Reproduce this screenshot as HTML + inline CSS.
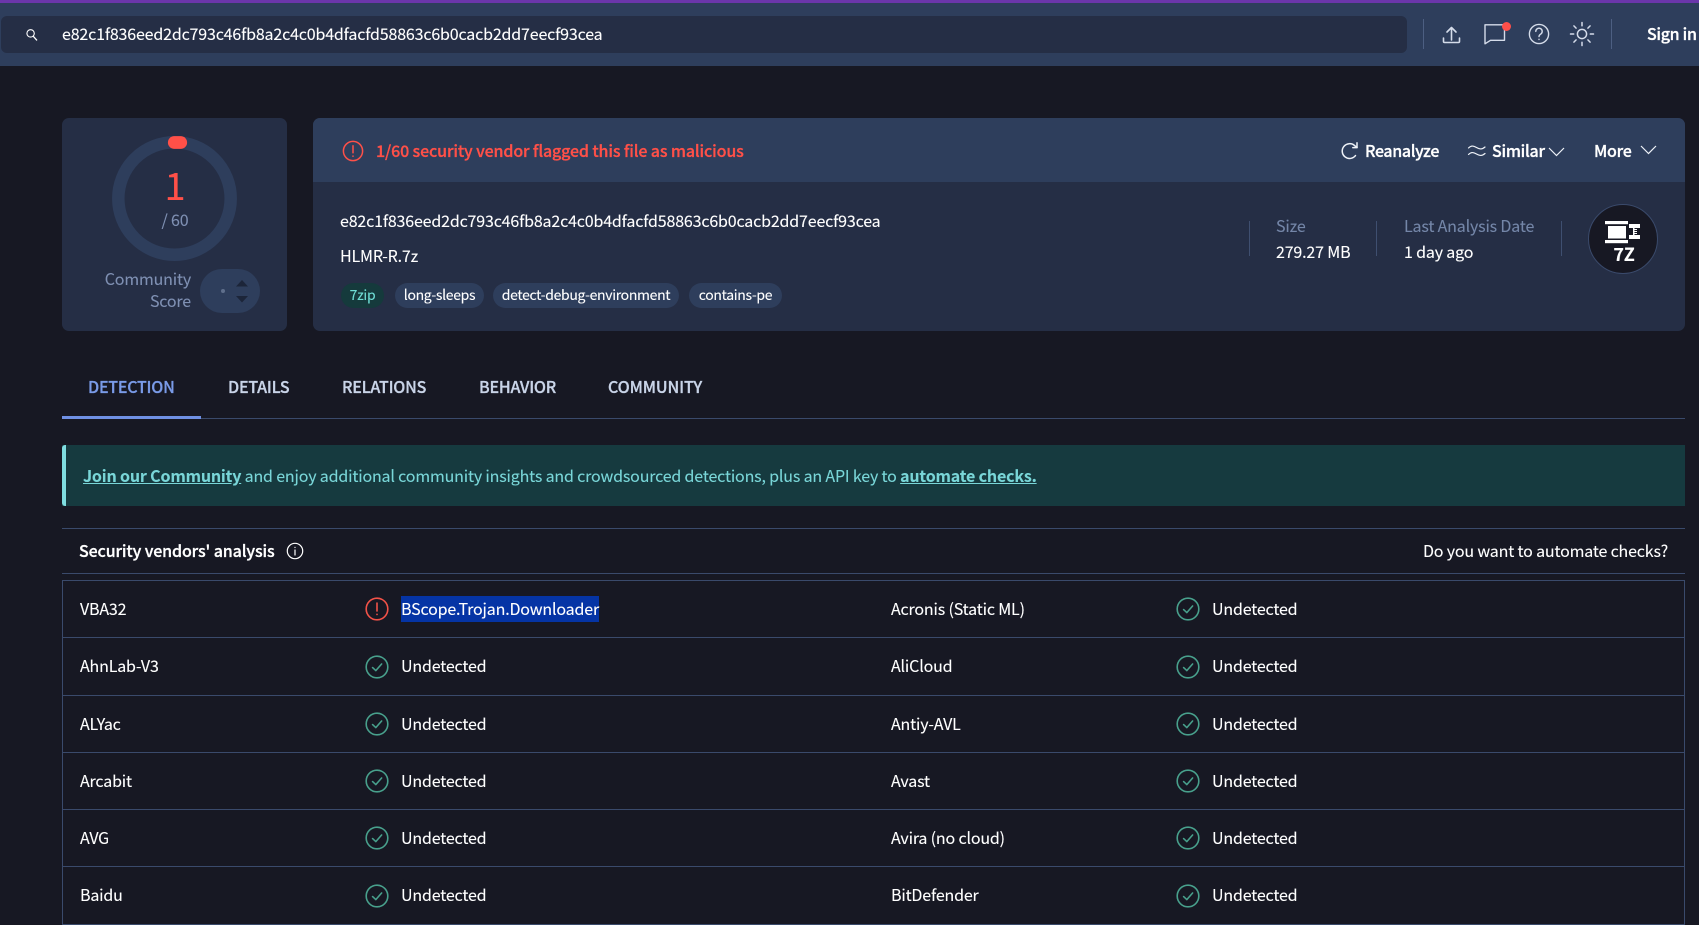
<!DOCTYPE html>
<html><head><meta charset="utf-8"><title>VirusTotal</title>
<style>
html,body{margin:0;padding:0;background:#171823;}
body{width:1699px;height:925px;position:relative;overflow:hidden;font-family:"Liberation Sans","Noto Sans CJK JP",sans-serif;}
#p,#p *{font-family:"Noto Sans CJK JP","Liberation Sans",sans-serif;}
.a{position:absolute;}
.t{position:absolute;white-space:nowrap;font-size:16px;line-height:24px;height:24px;color:#fff;letter-spacing:-.17px;-webkit-text-stroke:.1px currentColor;}
.s{font-weight:500;-webkit-text-stroke:.3px currentColor;}
.m{color:#7486a8;}
.l{position:absolute;background:#3a4a6b;height:1px;}
.v{position:absolute;background:#3f4f70;width:1px;}
.g{position:absolute;height:25px;top:283px;border-radius:12.5px;background:#2e3e5c;color:#fff;font-size:14px;line-height:24px;text-align:center;letter-spacing:-.33px;-webkit-text-stroke:.1px currentColor;}
svg{position:absolute;overflow:visible;}
.h{color:#c9d4e8;letter-spacing:-.22px;}
</style></head><body><div id="p">
<div class="a" style="left:0;top:0;width:1699px;height:66px;background:#2e3e5c"></div>
<div class="a" style="left:0;top:0;width:1699px;height:3px;background:#6b36aa"></div>
<div class="a" style="left:1px;top:16px;width:1406px;height:37px;background:#252e45;border-radius:6px"></div>
<svg style="left:24px;top:27px" width="16" height="16" viewBox="0 0 16 16" fill="none" stroke="#fff" stroke-width="1.1"><circle cx="6.6" cy="6.4" r="3.7"/><path d="M9.2 9.2 13 13.4" stroke-width="1.3"/></svg>
<span class="t" style="left:62px;top:21px">e82c1f836eed2dc793c46fb8a2c4c0b4dfacfd58863c6b0cacb2dd7eecf93cea</span>
<div class="v" style="left:1423px;top:19px;height:30px;background:#4d5f82"></div>
<svg style="left:1440px;top:24px" width="22" height="22" viewBox="0 0 22 22" fill="none" stroke="#d5dcea" stroke-width="1.6" stroke-linecap="round" stroke-linejoin="round"><path d="M11.5 16V4M7 8l4.5-4.5L16 8"/><path d="M3.5 14v3.4q0 1.1 1.1 1.1h13.8q1.1 0 1.1-1.1V14"/></svg>
<svg style="left:1483px;top:22px" width="24" height="24" viewBox="0 0 24 24" fill="none" stroke="#d5dcea" stroke-width="1.4" stroke-linejoin="round"><path d="M2 2.8h19.5v15.5H7.5L2 21.8z"/></svg>
<div class="a" style="left:1502px;top:21.500px;width:9px;height:9px;border-radius:50%;background:#ff4f4a"></div>
<svg style="left:1527px;top:22px" width="24" height="24" viewBox="0 0 24 24" fill="none" stroke="#d5dcea" stroke-width="1.4" stroke-linecap="round"><circle cx="12" cy="12" r="9.6"/><path d="M8.8 9.4a3.2 3.2 0 1 1 4.8 2.8c-1 .6-1.6 1.2-1.6 2.4"/><path d="M12 17.3v.2"/></svg>
<svg style="left:1568px;top:20px" width="28" height="28" viewBox="0 0 28 28" fill="none" stroke="#d5dcea" stroke-width="1.5" stroke-linecap="round"><circle cx="14" cy="14" r="4.6"/><path d="M14 2.500v3.200M14 22.300v3.200M2.500 14h3.200M22.300 14h3.200M5.900 5.900l2.200 2.200M19.900 19.900l2.200 2.200M5.900 22.100l2.200-2.200M19.900 8.100l2.200-2.200"/></svg>
<div class="v" style="left:1611px;top:19px;height:30px;background:#4d5f82"></div>
<span class="t s" style="left:1647px;top:21px;letter-spacing:-.3px">Sign in</span>

<!-- score card -->
<div class="a" style="left:62px;top:118px;width:225px;height:213px;background:#252e45;border-radius:7px"></div>
<svg style="left:112px;top:136px" width="126" height="126" viewBox="0 0 126 126" fill="none"><circle cx="62.5" cy="62.5" r="56.2" stroke="#2e3e5c" stroke-width="12.5"/><path d="M62.300 6.500h6.400" stroke="#ff5048" stroke-width="12.800" stroke-linecap="round"/></svg>
<span class="t" style="left:125px;width:100px;text-align:center;top:159px;font-size:38px;line-height:50px;height:50px;color:#ff5048;letter-spacing:0">1</span>
<span class="t m" style="left:125px;width:100px;text-align:center;top:207px;color:#7f90b3">/ 60</span>
<span class="t m" style="right:1508px;top:266px;text-align:right;color:#7f90b3">Community</span>
<span class="t m" style="right:1508px;top:288px;text-align:right;color:#7f90b3">Score</span>
<div class="a" style="left:200px;top:269px;width:60px;height:44px;border-radius:22px;background:#2e3e5c"></div>
<div class="a" style="left:221px;top:289px;width:4px;height:4px;border-radius:50%;background:#5f6f8c"></div>
<svg style="left:235px;top:279px" width="14" height="24" viewBox="0 0 14 24" fill="#1c2539"><path d="M7 1l6 6.500H1z"/><path d="M1 17h12l-6 6.500z"/></svg>

<!-- main card -->
<div class="a" style="left:313px;top:118px;width:1372px;height:213px;background:#252e45;border-radius:7px;overflow:hidden"><div class="a" style="left:0;top:0;width:1372px;height:64px;background:#2e3e5c"></div></div>
<svg style="left:342px;top:140px" width="22" height="22" viewBox="0 0 22 22" fill="none" stroke="#ff5048" stroke-width="1.5" stroke-linecap="round"><circle cx="11" cy="11" r="9.6"/><path d="M11 5.800v7"/><path d="M11 16v.2"/></svg>
<span class="t s" style="left:376px;top:138px;color:#ff5048;letter-spacing:-.13px">1/60 security vendor flagged this file as malicious</span>
<svg style="left:1340px;top:141px" width="20" height="20" viewBox="0 0 20 20" fill="none" stroke="#eef2f8" stroke-width="1.5" stroke-linecap="round" stroke-linejoin="round"><path d="M15.500 14.600A7.400 7.400 0 1 1 14.600 4.600L17 6.400"/><path d="M17 1.800v4.800h-4.200"/></svg>
<span class="t s" style="left:1365px;top:138px;letter-spacing:-.36px">Reanalyze</span>
<svg style="left:1468px;top:142px" width="20" height="18" viewBox="0 0 20 18" fill="none" stroke="#eef2f8" stroke-width="1.2" stroke-linecap="round"><path d="M.5 6C3 3.500 5 3.500 8.500 5.500S14 7.500 17 5"/><path d="M.5 12.500C3 10 5 10 8.500 12S14 14 17 11.500"/></svg>
<span class="t s" style="left:1492px;top:138px;letter-spacing:-.25px">Similar</span>
<svg style="left:1548px;top:146px" width="17" height="11" viewBox="0 0 17 11" fill="none" stroke="#eef2f8" stroke-width="1.2"><path d="M1 2l7.500 7.500L16 2"/></svg>
<span class="t s" style="left:1594px;top:138px;letter-spacing:-.25px">More</span>
<svg style="left:1640px;top:144px" width="17" height="11" viewBox="0 0 17 11" fill="none" stroke="#eef2f8" stroke-width="1.2"><path d="M1 2l7.500 7.500L16 2"/></svg>

<span class="t" style="left:340px;top:208px">e82c1f836eed2dc793c46fb8a2c4c0b4dfacfd58863c6b0cacb2dd7eecf93cea</span>
<span class="t" style="left:340px;top:243px">HLMR-R.7z</span>
<div class="g" style="left:341px;width:43px;background:#153a3c;color:#6fdcd4">7zip</div>
<div class="g" style="left:395px;width:89px">long-sleeps</div>
<div class="g" style="left:493px;width:186px">detect-debug-environment</div>
<div class="g" style="left:689px;width:93px">contains-pe</div>

<div class="v" style="left:1249px;top:221px;height:35px"></div>
<div class="v" style="left:1376px;top:221px;height:35px"></div>
<div class="v" style="left:1561px;top:221px;height:35px"></div>
<span class="t m" style="left:1276px;top:213px">Size</span>
<span class="t" style="left:1276px;top:239px">279.27 MB</span>
<span class="t m" style="left:1404px;top:213px">Last Analysis Date</span>
<span class="t" style="left:1404px;top:239px">1 day ago</span>
<div class="a" style="left:1588px;top:204px;width:68px;height:68px;border-radius:50%;background:#171823;border:1px solid #3a4a6b"></div>
<svg style="left:1605px;top:221px" width="38" height="26" viewBox="0 0 38 26" fill="#fff"><rect x="0" y="0" width="23" height="3.2"/><rect x="3" y="5" width="18" height="12.500"/><rect x="0" y="19" width="23" height="3.200"/><rect x="24" y="3" width="11" height="4"/><rect x="24" y="14" width="11" height="4"/><path d="M28 7h1.500v7H28zM29.500 8h2.500v1h-2.500zM29.500 10h2.500v1h-2.500zM29.500 12h2.500v1h-2.500z"/></svg>
<span class="t" style="left:1604px;top:243px;width:40px;text-align:center;font-weight:700;font-size:18px;line-height:22px;height:22px">7Z</span>

<!-- tabs -->
<span class="t s" style="left:88px;top:374px;color:#7a9be8;letter-spacing:-.24px">DETECTION</span>
<span class="t s h" style="left:228px;top:374px">DETAILS</span>
<span class="t s h" style="left:342px;top:374px">RELATIONS</span>
<span class="t s h" style="left:479px;top:374px">BEHAVIOR</span>
<span class="t s h" style="left:608px;top:374px;letter-spacing:-.12px">COMMUNITY</span>
<div class="l" style="left:62px;top:418px;width:1623px"></div>
<div class="a" style="left:62px;top:416px;width:139px;height:3px;background:#6f90e4"></div>

<!-- banner -->
<div class="a" style="left:62px;top:445px;width:1623px;height:61px;background:#163a3f"></div>
<div class="a" style="left:62px;top:445px;width:4px;height:61px;background:#7fdde0;border-radius:3px 0 0 3px"></div>
<span class="t" style="left:83px;top:463px;color:#79d6d8"><b style="font-weight:700;text-decoration:underline">Join our Community</b> and enjoy additional community insights and crowdsourced detections, plus an API key to <b style="font-weight:700;text-decoration:underline">automate checks.</b></span>

<!-- header -->
<div class="l" style="left:62px;top:528px;width:1623px"></div>
<span class="t s" style="left:79px;top:538px;letter-spacing:-.12px">Security vendors' analysis</span>
<svg style="left:286px;top:542px" width="18" height="18" viewBox="0 0 18 18" fill="none" stroke="#fff" stroke-width="1.2" stroke-linecap="round"><circle cx="9" cy="9" r="7.7"/><path d="M9 8v5M9 5.300v.2"/></svg>
<span class="t" style="right:31px;top:538px">Do you want to automate checks?</span>
<div class="l" style="left:62px;top:573px;width:1623px"></div>

<!-- table -->
<div class="a" style="left:62px;top:580px;width:1623px;height:345px;box-sizing:border-box;border:1px solid #3a4a6b;border-bottom:none"></div>
<div class="l" style="left:62px;top:637px;width:1623px"></div>
<div class="l" style="left:62px;top:695px;width:1623px"></div>
<div class="l" style="left:62px;top:752px;width:1623px"></div>
<div class="l" style="left:62px;top:809px;width:1623px"></div>
<div class="l" style="left:62px;top:866px;width:1623px"></div>
<div class="l" style="left:62px;top:924px;width:1623px"></div>

<span class="t" style="left:80px;top:596px">VBA32</span>
<svg style="left:365px;top:597px" width="24" height="24" viewBox="0 0 24 24" fill="none" stroke="#f25248" stroke-width="1.6" stroke-linecap="round"><circle cx="12" cy="12" r="10.8"/><path d="M12 6v8"/><path d="M12 17.300v.2"/></svg>
<div class="a" style="left:401px;top:596px;width:198px;height:26px;background:#0534a5"></div>
<span class="t" style="left:401px;top:596px">BScope.Trojan.Downloader</span>
<span class="t" style="left:891px;top:596px">Acronis (Static ML)</span>
<svg style="left:1176px;top:597px" width="24" height="24" viewBox="0 0 24 24" fill="none" stroke="#48a08c" stroke-width="1.6" stroke-linecap="round" stroke-linejoin="round"><circle cx="12" cy="12" r="10.8"/><path d="M7.600 12.600l3.200 3 5.800-6.600"/></svg>
<span class="t" style="left:1212px;top:596px">Undetected</span>

<span class="t" style="left:80px;top:653px">AhnLab-V3</span>
<svg style="left:365px;top:655px" width="24" height="24" viewBox="0 0 24 24" fill="none" stroke="#48a08c" stroke-width="1.6" stroke-linecap="round" stroke-linejoin="round"><circle cx="12" cy="12" r="10.8"/><path d="M7.600 12.600l3.200 3 5.800-6.600"/></svg>
<span class="t" style="left:401px;top:653px">Undetected</span>
<span class="t" style="left:891px;top:653px">AliCloud</span>
<svg style="left:1176px;top:655px" width="24" height="24" viewBox="0 0 24 24" fill="none" stroke="#48a08c" stroke-width="1.6" stroke-linecap="round" stroke-linejoin="round"><circle cx="12" cy="12" r="10.8"/><path d="M7.600 12.600l3.200 3 5.800-6.600"/></svg>
<span class="t" style="left:1212px;top:653px">Undetected</span>

<span class="t" style="left:80px;top:711px">ALYac</span>
<svg style="left:365px;top:712px" width="24" height="24" viewBox="0 0 24 24" fill="none" stroke="#48a08c" stroke-width="1.6" stroke-linecap="round" stroke-linejoin="round"><circle cx="12" cy="12" r="10.8"/><path d="M7.600 12.600l3.200 3 5.800-6.600"/></svg>
<span class="t" style="left:401px;top:711px">Undetected</span>
<span class="t" style="left:891px;top:711px">Antiy-AVL</span>
<svg style="left:1176px;top:712px" width="24" height="24" viewBox="0 0 24 24" fill="none" stroke="#48a08c" stroke-width="1.6" stroke-linecap="round" stroke-linejoin="round"><circle cx="12" cy="12" r="10.8"/><path d="M7.600 12.600l3.200 3 5.800-6.600"/></svg>
<span class="t" style="left:1212px;top:711px">Undetected</span>

<span class="t" style="left:80px;top:768px">Arcabit</span>
<svg style="left:365px;top:769px" width="24" height="24" viewBox="0 0 24 24" fill="none" stroke="#48a08c" stroke-width="1.6" stroke-linecap="round" stroke-linejoin="round"><circle cx="12" cy="12" r="10.8"/><path d="M7.600 12.600l3.200 3 5.800-6.600"/></svg>
<span class="t" style="left:401px;top:768px">Undetected</span>
<span class="t" style="left:891px;top:768px">Avast</span>
<svg style="left:1176px;top:769px" width="24" height="24" viewBox="0 0 24 24" fill="none" stroke="#48a08c" stroke-width="1.6" stroke-linecap="round" stroke-linejoin="round"><circle cx="12" cy="12" r="10.8"/><path d="M7.600 12.600l3.200 3 5.800-6.600"/></svg>
<span class="t" style="left:1212px;top:768px">Undetected</span>

<span class="t" style="left:80px;top:825px">AVG</span>
<svg style="left:365px;top:826px" width="24" height="24" viewBox="0 0 24 24" fill="none" stroke="#48a08c" stroke-width="1.6" stroke-linecap="round" stroke-linejoin="round"><circle cx="12" cy="12" r="10.8"/><path d="M7.600 12.600l3.200 3 5.800-6.600"/></svg>
<span class="t" style="left:401px;top:825px">Undetected</span>
<span class="t" style="left:891px;top:825px">Avira (no cloud)</span>
<svg style="left:1176px;top:826px" width="24" height="24" viewBox="0 0 24 24" fill="none" stroke="#48a08c" stroke-width="1.6" stroke-linecap="round" stroke-linejoin="round"><circle cx="12" cy="12" r="10.8"/><path d="M7.600 12.600l3.200 3 5.800-6.600"/></svg>
<span class="t" style="left:1212px;top:825px">Undetected</span>

<span class="t" style="left:80px;top:882px">Baidu</span>
<svg style="left:365px;top:884px" width="24" height="24" viewBox="0 0 24 24" fill="none" stroke="#48a08c" stroke-width="1.6" stroke-linecap="round" stroke-linejoin="round"><circle cx="12" cy="12" r="10.8"/><path d="M7.600 12.600l3.200 3 5.800-6.600"/></svg>
<span class="t" style="left:401px;top:882px">Undetected</span>
<span class="t" style="left:891px;top:882px">BitDefender</span>
<svg style="left:1176px;top:884px" width="24" height="24" viewBox="0 0 24 24" fill="none" stroke="#48a08c" stroke-width="1.6" stroke-linecap="round" stroke-linejoin="round"><circle cx="12" cy="12" r="10.8"/><path d="M7.600 12.600l3.200 3 5.800-6.600"/></svg>
<span class="t" style="left:1212px;top:882px">Undetected</span>
</div></body></html>
